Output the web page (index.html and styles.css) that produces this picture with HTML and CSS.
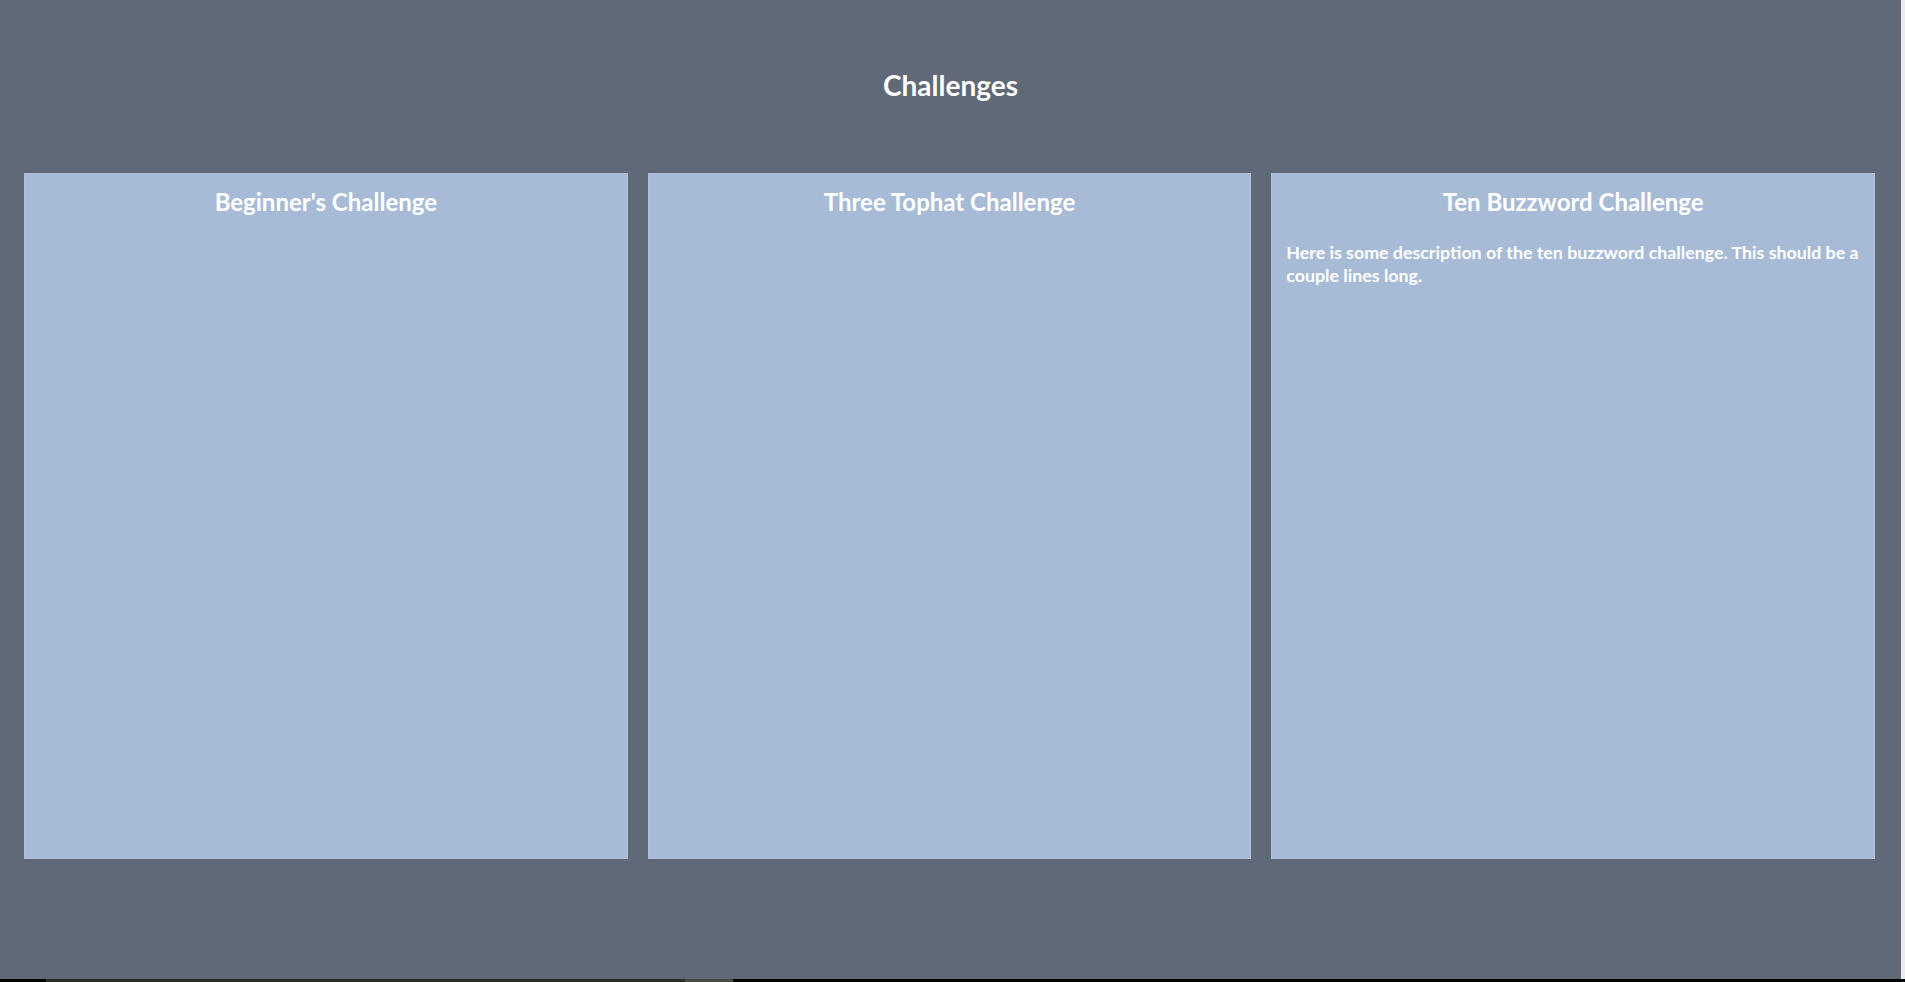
FILE: index.html
```html
<!DOCTYPE html>
<html>
<head>
<meta charset="utf-8">
<link rel="stylesheet" href="styles.css">
</head>
<body>
<div class="frame">
  <div class="page">
    <h1 class="title">Challenges</h1>
    <div class="cards">
      <div class="card">
        <h2 class="card-title">Beginner's Challenge</h2>
      </div>
      <div class="card">
        <h2 class="card-title">Three Tophat Challenge</h2>
      </div>
      <div class="card">
        <h2 class="card-title">Ten Buzzword Challenge</h2>
        <p class="card-desc">Here is some description of the ten buzzword challenge. This should be a couple lines long.</p>
      </div>
    </div>
  </div>
  <div class="edge"></div>
</div>
<div class="bottom-bar">
  <span class="seg seg-a"></span>
  <span class="seg seg-b"></span>
  <span class="seg seg-c"></span>
</div>
</body>
</html>
```

FILE: styles.css
```css
html, body {
  margin: 0;
  padding: 0;
}
body {
  background: #5f6977;
  font-family: Lato, "Open Sans", sans-serif;
  color: #ffffff;
  overflow: hidden;
  width: 1905px;
  height: 982px;
}
.frame {
  display: flex;
  height: 979px;
}
.page {
  width: 1901px;
  display: flex;
  flex-direction: column;
}
.edge {
  width: 4px;
  background: #ececec;
}
.title {
  margin: 0;
  padding-top: 68px;
  height: 173px;
  box-sizing: border-box;
  text-align: center;
  font-size: 28px;
  font-weight: 700;
  line-height: 34px;
}
.cards {
  display: flex;
  gap: 20px;
  padding: 0 26px 0 24px;
}
.card {
  flex: 1 1 0;
  height: 686px;
  background: #a7bbd6;
  box-sizing: border-box;
  border: 1px solid #b0c2db;
  padding: 13px 14px 0;
}
.card-title {
  margin: 0;
  text-align: center;
  font-size: 24px;
  font-weight: 700;
  line-height: 30px;
}
.card-desc {
  margin: 24px -4px 0 0;
  font-size: 17.8px;
  font-weight: 700;
  line-height: 23px;
}
.bottom-bar {
  height: 3px;
  background: #000000;
  display: flex;
}
.seg {
  display: block;
  height: 3px;
}
.seg-a {
  width: 46px;
}
.seg-b {
  width: 639px;
  background: #2b2b2b;
}
.seg-c {
  width: 48px;
  background: #4a4a4a;
}
```
